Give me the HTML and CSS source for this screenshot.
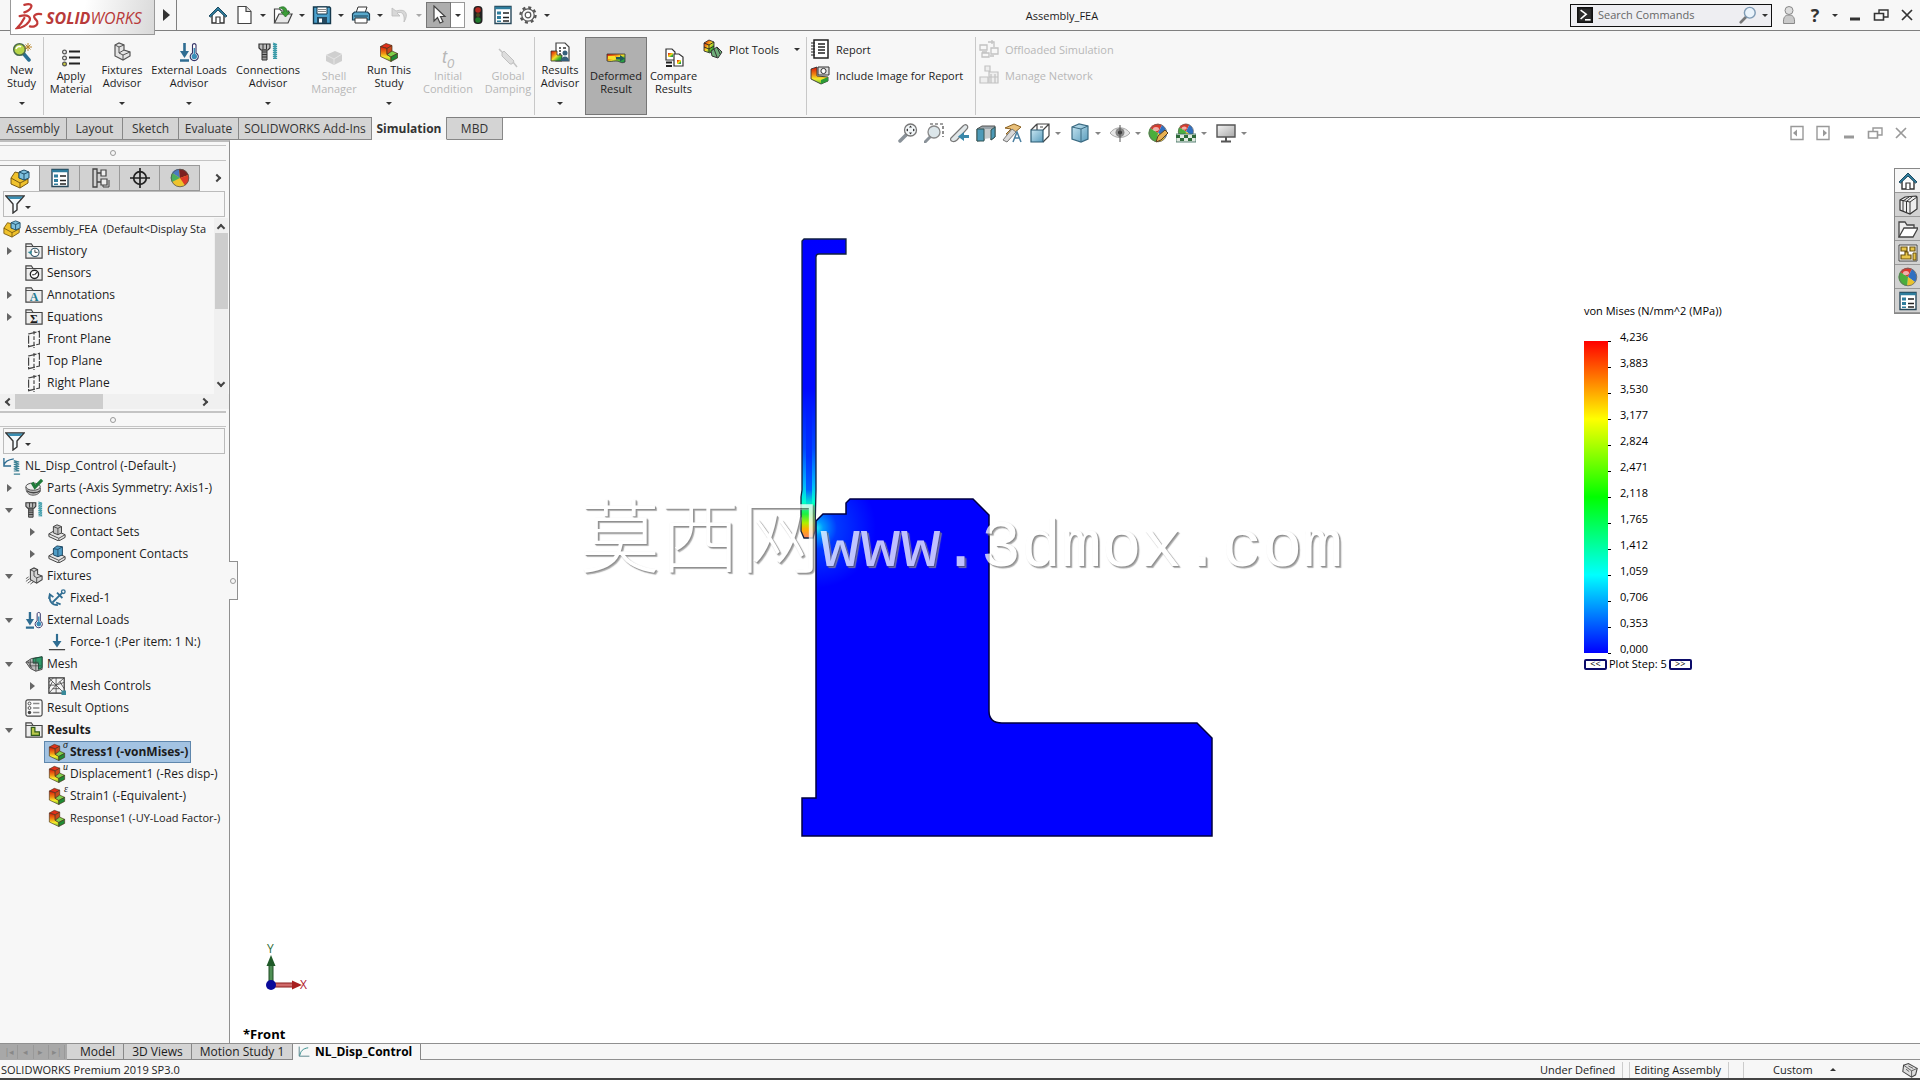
FILE: index.html
```html
<!DOCTYPE html>
<html lang="en">
<head>
<meta charset="utf-8">
<title>Assembly_FEA</title>
<link rel="stylesheet" href="styles.css">
</head>
<body>
<svg class="sprite" aria-hidden="true">
  <defs>
    <linearGradient id="g-rain" x1="0" y1="0" x2="1" y2="1"><stop offset="0" stop-color="#d8130c"/><stop offset=".3" stop-color="#f07a12"/><stop offset=".5" stop-color="#f4e02a"/><stop offset=".75" stop-color="#38b032"/><stop offset="1" stop-color="#127a60"/></linearGradient>
    <linearGradient id="g-side" x1="0" y1="0" x2="0" y2="1"><stop offset="0" stop-color="#d8130c"/><stop offset=".45" stop-color="#f08a12"/><stop offset=".7" stop-color="#f4ea2a"/><stop offset="1" stop-color="#5cc032"/></linearGradient>
    <linearGradient id="g-blue" x1="0" y1="0" x2="1" y2="1"><stop offset="0" stop-color="#c8e6f2"/><stop offset="1" stop-color="#5a9dbd"/></linearGradient>
    <linearGradient id="g-grey" x1="0" y1="0" x2="1" y2="1"><stop offset="0" stop-color="#f4f4f4"/><stop offset="1" stop-color="#a8a8a8"/></linearGradient>
    <symbol id="i-home" viewBox="0 0 20 20"><path d="M4 10v8h12v-8" fill="#fff" stroke="#333" stroke-width="1.4"/><path d="M8 18v-6h4v6" fill="#fff" stroke="#333" stroke-width="1.2"/><path d="M1 11l9-9 9 9-1.500 1L10 5l-7.500 7z" fill="#2f7d9d" stroke="#1d4a60"/></symbol>
    <symbol id="i-new" viewBox="0 0 20 20"><path d="M4 1.500h8l5 5v12H4z" fill="#fff" stroke="#444" stroke-width="1.200"/><path d="M12 1.500v5h5" fill="#ddd" stroke="#444" stroke-width="1.200"/></symbol>
    <symbol id="i-open" viewBox="0 0 20 20"><path d="M1.500 18V4h5l2 2h7v3" fill="#fff" stroke="#444" stroke-width="1.200"/><path d="M1.500 18L6 9h13l-4 9z" fill="#e8e8e8" stroke="#444" stroke-width="1.200"/><path d="M6 3c5-3 8 0 8 4h3l-4.500 5L8 7h3c0-2-2-4-5-4z" fill="#3c9c38" stroke="#1f6a22" stroke-width=".7"/></symbol>
    <symbol id="i-save" viewBox="0 0 20 20"><path d="M1.500 2h16l1 1v15.500h-17z" fill="#4aa0cc" stroke="#15384c" stroke-width="1.400"/><path d="M5 2h10v7H5z" fill="#fff" stroke="#15384c"/><path d="M6 4.500h8M6 6.500h8" stroke="#888"/><path d="M5 18v-6h10v6z" fill="#254a60"/><path d="M7 13.500h3v4H7z" fill="#fff"/></symbol>
    <symbol id="i-print" viewBox="0 0 20 20"><path d="M5 8L7 2h9l-2 6z" fill="#fff" stroke="#333"/><path d="M1.500 9l2-2h13l2 2v6h-17z" fill="#58a9cc" stroke="#1b4156" stroke-width="1.200"/><path d="M4 13h12v5H4z" fill="#fff" stroke="#333"/><path d="M3 11h14" stroke="#1b4156"/></symbol>
    <symbol id="i-undo" viewBox="0 0 20 20"><path d="M2 3v8h8L7 8c5-2 8 1 7 9 5-8 2-14-8-11z" fill="#d8d8d8" stroke="#bbb" stroke-width=".8"/></symbol>
    <symbol id="i-cursor" viewBox="0 0 20 20"><path d="M5 1v15l3.500-3.500L11 18l3-1.300-2.500-5.200H16z" fill="#fff" stroke="#444" stroke-width="1.200"/></symbol>
    <symbol id="i-light" viewBox="0 0 20 20"><rect x="5.500" y="1" width="9" height="18" rx="4" fill="#222"/><circle cx="10" cy="5" r="2.800" fill="#b52a22"/><circle cx="10" cy="10" r="2" fill="#4d4520"/><circle cx="10" cy="15" r="2.800" fill="#1f7a2c"/></symbol>
    <symbol id="i-list" viewBox="0 0 20 20"><path d="M2 1.500h16v17H2z" fill="#fff" stroke="#28485a" stroke-width="1.400"/><path d="M2 3h16" stroke="#2f7d9d" stroke-width="2.500"/><path d="M4 6.500h4v3H4zM4 11h4v3H4zM4 15.500h4v1.500H4z" fill="#2f7d9d"/><path d="M10 8h6M10 12.500h6M10 16h6" stroke="#222" stroke-width="1.400"/></symbol>
    <symbol id="i-gear" viewBox="0 0 20 20"><circle cx="10" cy="10" r="7.500" fill="none" stroke="#555" stroke-width="2.400" stroke-dasharray="3 2.890"/><circle cx="10" cy="10" r="6.200" fill="#fafafa" stroke="#555" stroke-width="1.200"/><circle cx="10" cy="10" r="2.800" fill="#fff" stroke="#555" stroke-width="1.200"/></symbol>
    <symbol id="i-term" viewBox="0 0 20 20"><path d="M1 1h18v18H1z" fill="#2b2b2b" stroke="#111" stroke-width="2"/><path d="M4.500 4l7 5-7 6" fill="none" stroke="#fff" stroke-width="2"/><path d="M10 16h7" stroke="#fff" stroke-width="2"/></symbol>
    <symbol id="i-mag" viewBox="0 0 20 20"><path d="M2 18l6-6" stroke="#777" stroke-width="3" stroke-linecap="round"/><circle cx="12" cy="7.500" r="6" fill="#eaf3fb" stroke="#7f9bb5" stroke-width="1.600"/></symbol>
    <symbol id="i-user" viewBox="0 0 20 20"><path d="M4.500 18.500c-.5-7 2-8.500 5.500-8.500s6 1.500 5.500 8.500z" fill="#c9c9c9" stroke="#888"/><circle cx="10" cy="5.500" r="4" fill="#ddd" stroke="#888"/></symbol>
    <symbol id="i-min" viewBox="0 0 20 20"><path d="M5 14h10" stroke="currentColor" stroke-width="3"/></symbol>
    <symbol id="i-restore" viewBox="0 0 20 20"><path d="M8 8V5h9v7h-4" fill="none" stroke="currentColor" stroke-width="1.400"/><path d="M3.500 8.500h9v6.500h-9z" fill="none" stroke="currentColor" stroke-width="1.600"/></symbol>
    <symbol id="i-close" viewBox="0 0 20 20"><path d="M5 5l10 10M15 5L5 15" stroke="currentColor" stroke-width="1.700"/></symbol>
    <symbol id="i-pleft" viewBox="0 0 20 20"><path d="M4 3.500h12v13H4z" fill="none" stroke="currentColor" stroke-width="1.400"/><path d="M10 6.500v7L6 10z" fill="currentColor"/></symbol>
    <symbol id="i-pright" viewBox="0 0 20 20"><path d="M4 3.500h12v13H4z" fill="none" stroke="currentColor" stroke-width="1.400"/><path d="M10 6.500v7l4-3.500z" fill="currentColor"/></symbol>
    <symbol id="i-study" viewBox="0 0 20 20"><path d="M11 11l6 7" stroke="#2a6f92" stroke-width="3.500" stroke-linecap="round"/><circle cx="7.500" cy="7.500" r="5.800" fill="#b9d64a" stroke="#4a6a4a" stroke-width="1.500"/><path d="M4 7c1-3 4-3 5-2" stroke="#fff" stroke-width="1.500" fill="none"/><path d="M16 1v8M12 5h8M13.500 2.500l5 5M18.500 2.500l-5 5" stroke="#b8862a"/></symbol>
    <symbol id="i-material" viewBox="0 0 20 20"><g fill="#eee" stroke="#555" stroke-width="1.200"><circle cx="3.500" cy="4" r="1.900"/><circle cx="3.500" cy="10" r="1.900"/><circle cx="3.500" cy="16" r="1.900" fill="#c8c840"/></g><path d="M8 3.500h11M8 9.500h11M8 15.500h11" stroke="#222" stroke-width="2"/></symbol>
    <symbol id="i-fixture" viewBox="0 0 20 20"><path d="M3 3l4-2 5 2v5l6 2v4l-7 4-8-4z" fill="#e4e4e4" stroke="#555" stroke-width="1.200"/><path d="M3 3l4 2v6l4 2v5M7 5l5-2M7 11l5-3M11 13l7-3" fill="none" stroke="#555"/></symbol>
    <symbol id="i-fixtree" viewBox="0 0 20 20"><path d="M6 3l4-2 4 2v5l5 2v4l-6 4-7-4z" fill="#d4d4d4" stroke="#444" stroke-width="1.200"/><path d="M6 3l4 2v5l3 2v6M10 5l4-2M13 12l6-2" fill="none" stroke="#444"/><path d="M1 13l3-2M1 16l4-3M3 18l4-3M6 19l4-3" stroke="#555"/></symbol>
    <symbol id="i-loads" viewBox="0 0 20 20"><path d="M5.500 1v12M1 18.500h9" stroke="#2f6d92" stroke-width="2.600"/><path d="M1 9h9l-4.500 7z" fill="#2f6d92"/><path d="M13.500 3a1.800 1.800 0 0 1 3.500 0v8a4 4 0 1 1-3.500 0z" fill="#fff" stroke="#336" stroke-width="1.100"/><circle cx="15.300" cy="14.500" r="2.700" fill="#3a8db8"/><path d="M15.300 6v8" stroke="#3a8db8" stroke-width="1.500"/></symbol>
    <symbol id="i-bolt" viewBox="0 0 20 20"><path d="M1 2h11v4l-2 2H3L1 6z" fill="#bbb" stroke="#333" stroke-width="1.200"/><path d="M4 8h5v10H4z" fill="#999" stroke="#333"/><path d="M4 10h5M4 12.500h5M4 15h5M5 2v5M8.500 2v5" stroke="#333"/><path d="M15 1l4 1.500h-4l4 2h-4l4 2h-4l4 2h-4l4 2h-4l4 2h-4l4 2h-4l4 2h-4" fill="none" stroke="#3a9aa8" stroke-width="1.100"/></symbol>
    <symbol id="i-shell" viewBox="0 0 20 20"><path d="M2 7l9-4 7 3v7l-8 4-8-4z" fill="#cfcfcf"/><path d="M2 7l8 4 8-5M10 11v6" stroke="#e4e4e4" fill="none"/></symbol>
    <symbol id="i-run" viewBox="0 0 20 20"><g stroke="#4a3018" stroke-width=".7" stroke-linejoin="round"><path d="M1.500 4.500L7 1.500l6 2-5 3z" fill="#e0301a"/><path d="M1.500 4.500L8 6.500v6l4 2.500v4.500l-10.500-5z" fill="url(#g-side)"/><path d="M8 6.500l5-3V9l-5 3.500z" fill="#c8481c"/><path d="M8 12.500L13 9l5.500 2.500L12 15z" fill="#7fd04a"/><path d="M12 15l6.500-3.500v4.500L12 19.500z" fill="#1f8a34"/></g></symbol>
    <symbol id="i-damping" viewBox="0 0 20 20"><path d="M1 1l5 5M15 14l4 5" stroke="#c4c4c4" stroke-width="1.500"/><path d="M4 5l2-2 10 10-2 3-2 0-8-8z" fill="#ddd" stroke="#c0c0c0"/></symbol>
    <symbol id="i-results" viewBox="0 0 20 20"><path d="M6 1h9l4 4v14H6z" fill="#fff" stroke="#444" stroke-width="1.200"/><path d="M9 6h2M13 6h3M9 9h2M9 12h2" stroke="#333" stroke-width="1.500"/><path d="M1 9h6v4h5v6H1z" fill="url(#g-rain)" stroke="#333" stroke-width=".8"/><circle cx="15" cy="11" r="2.500" fill="#355f7a"/><path d="M11 19c0-6 8-6 8 0z" fill="#355f7a"/></symbol>
    <symbol id="i-deformed" viewBox="0 0 20 20"><path d="M1 6h18v8c-4 2-5-1-9-1s-6 1-9 0z" fill="url(#g-rain)" stroke="#333" stroke-width=".8"/><path d="M2 8h7v3H2z" fill="#f4e02a"/><path d="M10 9h4V7l5 3.500-5 3v-2h-4z" fill="#1f5a58"/></symbol>
    <symbol id="i-compare" viewBox="0 0 20 20"><path d="M2 1h6l3 3v8H2z" fill="#fff" stroke="#333" stroke-width="1.200"/><path d="M4 5h5v4H4z" fill="url(#g-rain)"/><path d="M10 6h5l4 3v9h-9z" fill="#fff" stroke="#333" stroke-width="1.200"/><path d="M13 12h4v4h-4z" fill="url(#g-rain)"/><path d="M2 14.500h6M2 18h6" stroke="#222" stroke-width="2"/></symbol>
    <symbol id="i-plot" viewBox="0 0 20 20"><path d="M1 4l5-3 5 2v8l-4 3-6-2z" fill="url(#g-rain)" stroke="#333" stroke-width=".9"/><path d="M1 4l5 2 5-3M6 6v7M1 8l5 2 5-3" stroke="#222" stroke-width=".9" fill="none"/><path d="M8 12l6-4 5 5-4 6-6-2z" fill="#6fae7a" stroke="#333"/><path d="M11 10l3 8M14 8l3 7" stroke="#333"/></symbol>
    <symbol id="i-report" viewBox="0 0 20 20"><path d="M4 1h14v18H4z" fill="#fff" stroke="#222" stroke-width="1.500"/><path d="M1 4h4M1 7h4M1 10h4M1 13h4M1 16h4" stroke="#222" stroke-width="1.200"/><path d="M8 5h7M8 8h7M8 11h7M8 14h7" stroke="#222" stroke-width="1.400"/></symbol>
    <symbol id="i-image" viewBox="0 0 20 20"><path d="M1 4l6-2v9l11 1v4l-7 3-10-5z" fill="url(#g-side)" stroke="#333" stroke-width=".9"/><path d="M11 15l7-3v4l-7 3z" fill="#2c9a38"/><path d="M8 2h11v8H8z" fill="#ddd" stroke="#333"/><circle cx="13.500" cy="6" r="2.600" fill="#fff" stroke="#333"/></symbol>
    <symbol id="i-offload" viewBox="0 0 20 20"><g fill="none" stroke="#c2c2c2" stroke-width="1.300"><path d="M1 6h7v5H1zM12 9h7v6h-7zM3 14h7v4H3z"/><path d="M9 3h6v5M11 17h4M13 1v4M3 13h5"/></g></symbol>
    <symbol id="i-network" viewBox="0 0 20 20"><g fill="#eee" stroke="#c2c2c2" stroke-width="1.200"><path d="M6 1h5v5H6zM10 7h9v11h-9z"/><path d="M1 12h8v6H1zM12 9v9M16 9v9M10 12h9"/></g></symbol>
    <symbol id="i-asm" viewBox="0 0 20 20"><path d="M1 9l4-6 4 1v5l9 1v4l-8 5-9-4z" fill="#f0c22c" stroke="#7a5b10" stroke-width="1"/><path d="M1 9l9 5v5M10 14l8-4" fill="none" stroke="#7a5b10"/><path d="M9 3l5-2 5 2v6l-5 2-5-2z" fill="#7dc0de" stroke="#1f4f6a"/><path d="M9 3l5 2 5-2M14 5v6" fill="none" stroke="#1f4f6a"/></symbol>
    <symbol id="i-conf" viewBox="0 0 20 20"><path d="M3 1h4v18H3zM7 5h4M7 14h4" fill="none" stroke="#444" stroke-width="1.300"/><path d="M11 2h5v6h-5zM11 11h6v6h-6z" fill="#eee" stroke="#444" stroke-width="1.200"/><path d="M13 17v2h6v-7" fill="none" stroke="#444"/></symbol>
    <symbol id="i-target" viewBox="0 0 20 20"><circle cx="10" cy="10" r="6.300" fill="none" stroke="#222" stroke-width="1.700"/><path d="M10 0v20M0 10h20" stroke="#222" stroke-width="1.700"/></symbol>
    <symbol id="i-ball" viewBox="0 0 20 20"><path d="M10 10L2 5a9 9 0 0 1 12-3z" fill="#d83a2c"/><path d="M10 10l4-8a9 9 0 0 1 3 13z" fill="#3170c0"/><path d="M10 10l7 5A9 9 0 0 1 9 19z" fill="#e9c22c"/><path d="M10 10l-1 9a9 9 0 0 1-7-14z" fill="#4aae3c"/><circle cx="10" cy="10" r="8.800" fill="none" stroke="#666" stroke-width=".8"/><ellipse cx="8" cy="6" rx="3" ry="2" fill="#fff" opacity=".6"/></symbol>
    <symbol id="i-app" viewBox="0 0 20 20"><circle cx="10" cy="10" r="9" fill="#eec32c"/><path d="M10 10L2 5a9 9 0 0 1 7-4z" fill="#4a7ac0"/><path d="M10 10L9 1a9 9 0 0 1 9.500 6z" fill="#7c2020"/><path d="M10 10l8.500-3A9 9 0 0 1 15 17.500z" fill="#dc3a28"/><path d="M10 10l-8 4a9 9 0 0 1 0-9z" fill="#4aae5c"/><circle cx="10" cy="10" r="8.800" fill="none" stroke="#555" stroke-width=".8"/></symbol>
    <symbol id="i-filter" viewBox="0 0 20 20"><path d="M1 2h18l-7 8v6l-4 3v-9z" fill="#f3fafd" stroke="#333" stroke-width="1.400"/><path d="M2 2.500h16L15.500 5h-11z" fill="#3a8fb4"/></symbol>
    <symbol id="i-folder" viewBox="0 0 20 20"><path d="M1 18V2h6l2 3h10v13z" fill="#eee" stroke="#444" stroke-width="1.300"/><path d="M1 5h8" stroke="#444"/></symbol>
    <symbol id="i-history" viewBox="0 0 20 20"><use href="#i-folder"/><circle cx="11" cy="11.500" r="4.600" fill="#fff" stroke="#356" stroke-width="1.200"/><path d="M11 8.500v3h3" stroke="#333" fill="none"/><path d="M3 11l3.500 3L8 10z" fill="#2f8a9a"/></symbol>
    <symbol id="i-sensor" viewBox="0 0 20 20"><use href="#i-folder"/><circle cx="10.500" cy="11.500" r="4.600" fill="#fff" stroke="#222" stroke-width="1.500"/><path d="M10.500 12l3-3M8 12h2" stroke="#222" stroke-width="1.200"/></symbol>
    <symbol id="i-plane" viewBox="0 0 20 20"><path d="M4 4.500l12-3v14l-12 3z" fill="none" stroke="#444" stroke-width="1.300" stroke-dasharray="9 1.500"/><path d="M10 1v19" stroke="#444" stroke-width="1.300" stroke-dasharray="4 2"/></symbol>
    <symbol id="i-curve" viewBox="0 0 20 20"><path d="M2 1v16h17" stroke="#356a72" stroke-width="1.300" fill="none"/><path d="M3 16C4 9 8 4 17 3" stroke="#2f8a8a" stroke-width="1.600" fill="none"/></symbol>
    <symbol id="i-nl" viewBox="0 0 20 20"><path d="M1 1v9h8M1 9C2 5 5 3 12 2" stroke="#2f6d92" stroke-width="1.500" fill="none"/><path d="M12 4l6 1.500h-6l6 2.500h-6l6 2.500h-6l6 2.500h-6l6 2.500h-6M12 19h7" stroke="#3a7f92" stroke-width="1.200" fill="none"/></symbol>
    <symbol id="i-parts" viewBox="0 0 20 20"><path d="M1 9c0 6 3 9 8 9s9-3 8-8z" fill="#bdbdbd" stroke="#555"/><ellipse cx="9" cy="8.500" rx="8" ry="4" fill="#eee" stroke="#444"/><path d="M2 13c4 3 11 3 15 0" stroke="#444" stroke-width="1.500" fill="none"/><path d="M8 4l3 5 8-8" stroke="#1f7a3a" stroke-width="3.500" fill="none"/></symbol>
    <symbol id="i-contact" viewBox="0 0 20 20"><path d="M1 12l7-4 11 5v3l-7 4-11-5z" fill="#e6e6e6" stroke="#444" stroke-width="1.100"/><path d="M1 12l11 5 7-4M12 17v3" fill="none" stroke="#444"/><path d="M6 4l4-2 5 2v7l-4 2-5-2z" fill="#c4c4c4" stroke="#444" stroke-width="1.100"/><path d="M6 4l5 2 4-2M11 6v7" stroke="#444" fill="none"/></symbol>
    <symbol id="i-comp" viewBox="0 0 20 20"><path d="M1 12l7-4 11 5v3l-7 4-11-5z" fill="#e6e6e6" stroke="#444" stroke-width="1.100"/><path d="M1 12l11 5 7-4M12 17v3" fill="none" stroke="#444"/><path d="M6 4l4-3 6 1v9l-5 2-5-2z" fill="#4f9dc6" stroke="#1f4a66" stroke-width="1.100"/><path d="M6 4l5 1 5-3M11 5v8" stroke="#1f4a66" fill="none"/></symbol>
    <symbol id="i-anchor" viewBox="0 0 20 20"><path d="M16 4L5 15" stroke="#2f6d92" stroke-width="2"/><circle cx="17" cy="3" r="2" fill="none" stroke="#2f6d92" stroke-width="1.500"/><path d="M2 7c-1 6 2 11 9 11M1 11l1-5 4 3M14 17l-5-2M10 4l6 6" fill="none" stroke="#2f6d92" stroke-width="2"/></symbol>
    <symbol id="i-force" viewBox="0 0 20 20"><path d="M10 1v11" stroke="#2f6d92" stroke-width="2.400"/><path d="M5 9h10l-5 7z" fill="#2f6d92"/><path d="M1 18.500h18" stroke="#444" stroke-width="1.400"/></symbol>
    <symbol id="i-mesh" viewBox="0 0 20 20"><path d="M1 8l6-4 12-2v14l-7 2-6-3z" fill="#bbb" stroke="#444"/><path d="M9 4l10-2v12l-4 2V9H9z" fill="#2f9a6a" stroke="#174a35"/><path d="M3 7l5 8M6 5v9M1 8h14M4 12h14M12 3v15" stroke="#444" stroke-width=".8"/></symbol>
    <symbol id="i-meshctl" viewBox="0 0 20 20"><path d="M1 1h17v17H1z" fill="#f4f4f4" stroke="#333" stroke-width="1.300"/><path d="M1 1l8 8 9-8M9 9l9 9M9 9l-8 9M9 9V1M9 9v9M1 9l8 0 9-3M1 6l5-5M5 13l8 0M13 5l5 8M5 5l-4 8" stroke="#444" stroke-width=".9" fill="none"/><path d="M15 15h5v5h-5z" fill="#3a8a9a"/></symbol>
    <symbol id="i-resopt" viewBox="0 0 20 20"><rect x="1" y="1" width="18" height="18" rx="2" fill="#fafafa" stroke="#444" stroke-width="1.300"/><path d="M9 5h7M9 10h7M9 15h7" stroke="#888" stroke-width="1.500"/><circle cx="5" cy="5" r="1.600" fill="none" stroke="#444"/><circle cx="5" cy="10" r="1.600" fill="none" stroke="#444"/><circle cx="5" cy="15" r="1.900" fill="#444"/></symbol>
    <symbol id="i-resfold" viewBox="0 0 20 20"><use href="#i-folder"/><path d="M7 7h4v5h5v4H7z" fill="#b8c84a" stroke="#2f5a1a" stroke-width="1.300"/></symbol>
    <symbol id="i-zoomfit" viewBox="0 0 20 20"><path d="M2 18l6-6" stroke="#8a9299" stroke-width="3.500" stroke-linecap="round"/><circle cx="12.500" cy="7" r="6" fill="#f1f5f7" stroke="#777" stroke-width="1.300"/><path d="M12.500 2.500l1.500 2h-3zM12.500 11.500l1.500-2h-3zM8 7l2-1.500v3zM17 7l-2-1.500v3z" fill="#333"/></symbol>
    <symbol id="i-zoomarea" viewBox="0 0 20 20"><path d="M6 1h13v13" fill="none" stroke="#444" stroke-width="1.200" stroke-dasharray="3 2"/><path d="M1 19l5-5" stroke="#8a9299" stroke-width="3" stroke-linecap="round"/><circle cx="10" cy="9" r="6" fill="#dce6ea" stroke="#888" stroke-width="1.300"/></symbol>
    <symbol id="i-prev" viewBox="0 0 20 20"><path d="M1 15L13 3c3-3 6 0 4 3L7 17c-3 3-8 1-6-2z" fill="#e0e6e8" stroke="#777" stroke-width="1.200"/><path d="M19 12v3h-5v3l-6-4.500L14 9v3z" fill="#3a88aa"/></symbol>
    <symbol id="i-section" viewBox="0 0 20 20"><path d="M1 6l5-3h13v11l-4 3V8H8v9l-7 1z" fill="#9aa4aa" stroke="#555"/><path d="M8 6h7v9l-7 1z" fill="#c4cacc"/><path d="M1 6h7v12H1z" fill="#4d9ab8" stroke="#355"/><path d="M15 7l4-3v10l-4 3z" fill="#4d9ab8" stroke="#355"/></symbol>
    <symbol id="i-anview" viewBox="0 0 20 20"><path d="M3 5l9-4 7 3-9 8-6-1 5-5z" fill="#e9c07a" stroke="#8a6020"/><path d="M1 17l9-11 4 3-9 10z" fill="#d9d9d9" stroke="#777"/><path d="M11 19l4-10 4 10M12.500 15h5" stroke="#4a7fa0" stroke-width="1.500" fill="none"/></symbol>
    <symbol id="i-cubeview" viewBox="0 0 20 20"><path d="M7 1h12v12M7 1L1 7M19 1l-6 6M19 13l-6 6M7 1v6M13 4h-3" stroke="#444" stroke-width="1.200" fill="none"/><path d="M1 7h12v12H1z" fill="url(#g-blue)" stroke="#2a5a72" stroke-width="1.200"/></symbol>
    <symbol id="i-cube" viewBox="0 0 20 20"><path d="M2 4l7-3 9 2v13l-7 3-9-3z" fill="url(#g-blue)" stroke="#3a6a82" stroke-width="1.200"/><path d="M2 4l9 2v13M11 6l7-3" fill="none" stroke="#3a6a82"/></symbol>
    <symbol id="i-eye" viewBox="0 0 20 20"><path d="M0 10c5-7 15-7 20 0-5 6-15 6-20 0z" fill="#e6e6e6" stroke="#aaa"/><circle cx="10" cy="9.500" r="4.500" fill="#888"/><circle cx="10" cy="9.500" r="2" fill="#333"/><path d="M10 2v17" stroke="#555"/></symbol>
    <symbol id="i-ballpen" viewBox="0 0 20 20"><use href="#i-ball"/><path d="M8 19l2-6 7-6 3 3-7 7z" fill="#e8b052" stroke="#5a4020"/></symbol>
    <symbol id="i-scene" viewBox="0 0 20 20"><use href="#i-ball" width="18" height="17" x="1"/><path d="M0 11h20v8H0z" fill="#dfe9df" stroke="#365" stroke-width=".8"/><path d="M0 12h4v3H0zM16 12h4v3h-4zM8 12h4v3H8zM4 15h4v3H4zM12 15h4v3h-4z" fill="#2f6a3a"/></symbol>
    <symbol id="i-monitor" viewBox="0 0 20 20"><path d="M1 2h18v12H1z" fill="url(#g-grey)" stroke="#555" stroke-width="1.400"/><path d="M10 14v4M5 18.500h10" stroke="#555" stroke-width="2"/></symbol>
    <symbol id="i-books" viewBox="0 0 20 20"><path d="M2 5l5-3 11-1 1 1v12l-7 5-10-4z" fill="#eee" stroke="#333" stroke-width="1.200"/><path d="M2 5l10 2 7-5M12 7v12M5 6v10M8.500 6.500v11M5 6l6-4M8.500 6.500l6-5" stroke="#333" fill="none"/></symbol>
    <symbol id="i-folder2" viewBox="0 0 20 20"><path d="M1 18V3h6l2 3h7v3" fill="#eee" stroke="#444" stroke-width="1.300"/><path d="M1 18L6 9h14l-5 9z" fill="#fff" stroke="#444" stroke-width="1.300"/></symbol>
    <symbol id="i-palette" viewBox="0 0 20 20"><path d="M1 2h18v16H1z" fill="#fff" stroke="#444"/><path d="M3 4h6v4H3zM12 4h5v4h-5zM7 9h3v3h3v4H3v-4h4z" fill="#e8c64a" stroke="#6a5210" stroke-width="1.200"/><path d="M15 10h3v7h-3z" fill="#e8c64a" stroke="#6a5210"/></symbol>
    <symbol id="i-tag" viewBox="0 0 20 20"><path d="M2 4l6-2 11 6-2 8-5 3L1 12z" fill="#ddd" stroke="#444" stroke-width="1.300"/><path d="M2 4l10 7 7-3M12 11v8M5 9l4 3M8 5l6 3" stroke="#444" fill="none"/></symbol>
  </defs>
</svg>

<header class="titlebar">
  <div class="brand">
    <svg class="brand-mark" viewBox="0 0 30 30" aria-hidden="true"><g fill="none" stroke="#c23a38" stroke-width="2.400" stroke-linecap="round"><path d="M10 2c6-2 9 0 7 3-1 2-4 4-7 5"/><path d="M5 14c9-2 13 1 10 6-3 4-8 7-13 7 3-3 6-7 8-11"/><path d="M28 12c-5-1-9 1-7 4 1 2 4 3 3 6-1 3-5 4-8 3"/></g></svg>
    <span class="brand-text"><b>SOLID</b>WORKS</span>
  </div>
  <button class="menu-arrow" aria-label="Show menu"></button>
  <nav class="quick" aria-label="Quick access">
    <button class="cell" aria-label="Home"><svg><use href="#i-home"/></svg></button>
    <button class="cell" aria-label="New"><svg><use href="#i-new"/></svg></button><button class="drop" aria-label="New options"></button>
    <button class="cell" aria-label="Open"><svg><use href="#i-open"/></svg></button><button class="drop" aria-label="Open options"></button>
    <button class="cell" aria-label="Save"><svg><use href="#i-save"/></svg></button><button class="drop" aria-label="Save options"></button>
    <button class="cell" aria-label="Print"><svg><use href="#i-print"/></svg></button><button class="drop" aria-label="Print options"></button>
    <button class="cell" aria-label="Undo" disabled><svg><use href="#i-undo"/></svg></button><button class="drop dim" aria-label="Undo options" disabled></button>
    <button class="cell pressed" aria-label="Select"><svg><use href="#i-cursor"/></svg></button><button class="drop boxed" aria-label="Select options"></button>
    <button class="cell" aria-label="Rebuild"><svg><use href="#i-light"/></svg></button>
    <button class="cell" aria-label="File properties"><svg><use href="#i-list"/></svg></button>
    <button class="cell" aria-label="Options"><svg><use href="#i-gear"/></svg></button><button class="drop" aria-label="Options menu"></button>
  </nav>
  <h1 class="doc-title">Assembly_FEA</h1>
  <label class="search"><svg class="s16"><use href="#i-term"/></svg><input type="search" placeholder="Search Commands" aria-label="Search Commands"><svg class="s18"><use href="#i-mag"/></svg><span class="caret"></span></label>
  <div class="win">
    <button class="cell26" aria-label="Log in"><svg><use href="#i-user"/></svg></button>
    <button class="cell26 help" aria-label="Help">?</button><button class="drop" aria-label="Help menu"></button>
    <button class="cell26" aria-label="Minimize"><svg><use href="#i-min"/></svg></button>
    <button class="cell26" aria-label="Restore"><svg><use href="#i-restore"/></svg></button>
    <button class="cell26" aria-label="Close"><svg><use href="#i-close"/></svg></button>
  </div>
</header>

<section class="ribbon" aria-label="Simulation commands">
  <button class="rb menu"><svg><use href="#i-study"/></svg><span>New<br>Study</span></button>
  <i class="sep"></i>
  <button class="rb"><svg><use href="#i-material"/></svg><span>Apply<br>Material</span></button>
  <button class="rb menu"><svg><use href="#i-fixture"/></svg><span>Fixtures<br>Advisor</span></button>
  <button class="rb menu"><svg><use href="#i-loads"/></svg><span>External Loads<br>Advisor</span></button>
  <button class="rb menu"><svg><use href="#i-bolt"/></svg><span>Connections<br>Advisor</span></button>
  <button class="rb" disabled><svg><use href="#i-shell"/></svg><span>Shell<br>Manager</span></button>
  <button class="rb menu"><svg><use href="#i-run"/></svg><span>Run This<br>Study</span></button>
  <button class="rb" disabled><em class="t0">t<sub>0</sub></em><span>Initial<br>Condition</span></button>
  <button class="rb" disabled><svg><use href="#i-damping"/></svg><span>Global<br>Damping</span></button>
  <i class="sep"></i>
  <button class="rb menu"><svg><use href="#i-results"/></svg><span>Results<br>Advisor</span></button>
  <button class="rb on"><svg><use href="#i-deformed"/></svg><span>Deformed<br>Result</span></button>
  <button class="rb"><svg><use href="#i-compare"/></svg><span>Compare<br>Results</span></button>
  <div class="stack">
    <button class="line"><svg><use href="#i-plot"/></svg><span class="grow">Plot Tools</span><span class="caret"></span></button>
  </div>
  <i class="sep"></i>
  <div class="stack">
    <button class="line"><svg><use href="#i-report"/></svg><span>Report</span></button>
    <button class="line"><svg><use href="#i-image"/></svg><span>Include Image for Report</span></button>
  </div>
  <i class="sep"></i>
  <div class="stack">
    <button class="line" disabled><svg><use href="#i-offload"/></svg><span>Offloaded Simulation</span></button>
    <button class="line" disabled><svg><use href="#i-network"/></svg><span>Manage Network</span></button>
  </div>
</section>

<nav class="cmd-tabs" aria-label="Command manager">
  <button>Assembly</button><button>Layout</button><button>Sketch</button><button>Evaluate</button><button class="wide">SOLIDWORKS Add-Ins</button><button class="mid active">Simulation</button><button>MBD</button>
</nav>

<main class="work">
  <aside class="panel">
    <div class="grip top"><i></i></div>
    <div class="ptabs">
      <button class="active" aria-label="Feature tree"><svg><use href="#i-asm"/></svg></button>
      <button aria-label="Properties"><svg><use href="#i-list"/></svg></button>
      <button aria-label="Configurations"><svg><use href="#i-conf"/></svg></button>
      <button aria-label="Dimensions"><svg><use href="#i-target"/></svg></button>
      <button aria-label="Appearances"><svg><use href="#i-app"/></svg></button>
      <button class="more" aria-label="More tabs"><i class="chev right"></i></button>
    </div>
    <label class="filter"><svg><use href="#i-filter"/></svg><span class="caret"></span><input type="text" aria-label="Filter features"></label>
    <div class="upper">
      <ul class="tree">
        <li class="root compact"><span class="label"><svg><use href="#i-asm"/></svg>Assembly_FEA&nbsp; (Default&lt;Display Sta</span></li>
        <li><i class="tw closed"></i><span class="label"><svg><use href="#i-history"/></svg>History</span></li>
        <li><i class="tw"></i><span class="label"><svg><use href="#i-sensor"/></svg>Sensors</span></li>
        <li><i class="tw closed"></i><span class="label"><span class="fold"><svg><use href="#i-folder"/></svg><b class="teal">A</b></span>Annotations</span></li>
        <li><i class="tw closed"></i><span class="label"><span class="fold"><svg><use href="#i-folder"/></svg><b>Σ</b></span>Equations</span></li>
        <li><i class="tw"></i><span class="label"><svg><use href="#i-plane"/></svg>Front Plane</span></li>
        <li><i class="tw"></i><span class="label"><svg><use href="#i-plane"/></svg>Top Plane</span></li>
        <li><i class="tw"></i><span class="label"><svg><use href="#i-plane"/></svg>Right Plane</span></li>
      </ul>
      <div class="vscroll"><i class="chev up"></i><b></b><i class="chev down"></i></div>
    </div>
    <div class="hscroll"><i class="chev left"></i><b></b><i class="chev right"></i></div>
    <div class="grip"><i></i></div>
    <label class="filter"><svg><use href="#i-filter"/></svg><span class="caret"></span><input type="text" aria-label="Filter study"></label>
    <ul class="tree study">
      <li class="root"><span class="label"><svg><use href="#i-nl"/></svg>NL_Disp_Control (-Default-)</span></li>
      <li><i class="tw closed"></i><span class="label"><svg><use href="#i-parts"/></svg>Parts (-Axis Symmetry: Axis1-)</span></li>
      <li><i class="tw open"></i><span class="label"><svg><use href="#i-bolt"/></svg>Connections</span></li>
      <li class="sub"><i class="tw closed"></i><span class="label"><svg><use href="#i-contact"/></svg>Contact Sets</span></li>
      <li class="sub"><i class="tw closed"></i><span class="label"><svg><use href="#i-comp"/></svg>Component Contacts</span></li>
      <li><i class="tw open"></i><span class="label"><svg><use href="#i-fixtree"/></svg>Fixtures</span></li>
      <li class="sub"><i class="tw"></i><span class="label"><svg><use href="#i-anchor"/></svg>Fixed-1</span></li>
      <li><i class="tw open"></i><span class="label"><svg><use href="#i-loads"/></svg>External Loads</span></li>
      <li class="sub"><i class="tw"></i><span class="label"><svg><use href="#i-force"/></svg>Force-1 (:Per item: 1 N:)</span></li>
      <li><i class="tw open"></i><span class="label"><svg><use href="#i-mesh"/></svg>Mesh</span></li>
      <li class="sub"><i class="tw closed"></i><span class="label"><svg><use href="#i-meshctl"/></svg>Mesh Controls</span></li>
      <li><i class="tw"></i><span class="label"><svg><use href="#i-resopt"/></svg>Result Options</span></li>
      <li class="strong"><i class="tw open"></i><span class="label"><svg><use href="#i-resfold"/></svg>Results</span></li>
      <li class="sub strong"><i class="tw"></i><span class="label selected"><span class="fold"><svg><use href="#i-run"/></svg><sup>σ</sup></span>Stress1 (-vonMises-)</span></li>
      <li class="sub"><i class="tw"></i><span class="label"><span class="fold"><svg><use href="#i-run"/></svg><sup>u</sup></span>Displacement1 (-Res disp-)</span></li>
      <li class="sub"><i class="tw"></i><span class="label"><span class="fold"><svg><use href="#i-run"/></svg><sup>ε</sup></span>Strain1 (-Equivalent-)</span></li>
      <li class="sub compact"><i class="tw"></i><span class="label"><svg><use href="#i-run"/></svg>Response1 (-UY-Load Factor-)</span></li>
    </ul>
  </aside>

  <section class="view" aria-label="Model view">
    <button class="handle" aria-label="Collapse panel"><i></i></button>
    <div class="hud">
      <button aria-label="Zoom to fit"><svg><use href="#i-zoomfit"/></svg></button>
      <button aria-label="Zoom to area"><svg><use href="#i-zoomarea"/></svg></button>
      <button aria-label="Previous view"><svg><use href="#i-prev"/></svg></button>
      <button aria-label="Section view"><svg><use href="#i-section"/></svg></button>
      <button aria-label="Annotation views"><svg><use href="#i-anview"/></svg></button>
      <button class="dd" aria-label="View orientation"><svg><use href="#i-cubeview"/></svg></button>
      <button class="dd" aria-label="Display style"><svg><use href="#i-cube"/></svg></button>
      <button class="dd" aria-label="Hide or show items"><svg><use href="#i-eye"/></svg></button>
      <button aria-label="Edit appearance"><svg><use href="#i-ballpen"/></svg></button>
      <button class="dd" aria-label="Apply scene"><svg><use href="#i-scene"/></svg></button>
      <button class="dd" aria-label="View settings"><svg><use href="#i-monitor"/></svg></button>
    </div>
    <div class="docwin">
      <button aria-label="Dock left"><svg><use href="#i-pleft"/></svg></button>
      <button aria-label="Dock right"><svg><use href="#i-pright"/></svg></button>
      <button aria-label="Minimize document"><svg><use href="#i-min"/></svg></button>
      <button aria-label="Restore document"><svg><use href="#i-restore"/></svg></button>
      <button aria-label="Close document"><svg><use href="#i-close"/></svg></button>
    </div>

    <svg class="model" viewBox="800 237 416 602" role="img" aria-label="Stress plot of the assembly section">
      <defs>
        <linearGradient id="m-arm" gradientUnits="userSpaceOnUse" x1="0" y1="239" x2="0" y2="538"><stop offset="0" stop-color="#00f"/><stop offset=".5" stop-color="#0008ff"/><stop offset=".7" stop-color="#0048ff"/><stop offset=".82" stop-color="#00b4ff"/><stop offset=".88" stop-color="#00ffd0"/><stop offset=".92" stop-color="#20f040"/><stop offset=".95" stop-color="#b0f000"/><stop offset=".97" stop-color="#ffb000"/><stop offset="1" stop-color="#ff8060"/></linearGradient>
        <linearGradient id="m-core" gradientUnits="userSpaceOnUse" x1="0" y1="400" x2="0" y2="512"><stop offset="0" stop-color="#0000ff" stop-opacity="0"/><stop offset=".5" stop-color="#0030ff"/><stop offset=".8" stop-color="#0060ff"/><stop offset="1" stop-color="#00e0c0" stop-opacity="0"/></linearGradient>
        <radialGradient id="m-hot" gradientUnits="userSpaceOnUse" cx="816" cy="528" r="60"><stop offset="0" stop-color="#20f0f0"/><stop offset=".12" stop-color="#0098ff"/><stop offset=".35" stop-color="#0038ff"/><stop offset="1" stop-color="#00f"/></radialGradient>
      </defs>
      <path d="M802 798H816V521L823 514H846V503L850 499H973L989 515V711Q989 723 1002 723H1197L1212 738V836H802Z" fill="url(#m-hot)" stroke="#000040" stroke-width="1.500"/>
      <path d="M804 239H846V254H819Q816 254 816 257V490L815 531 813 538H804L801 531V497L802 490V241Z" fill="url(#m-arm)" stroke="#102040" stroke-width="1.300"/>
      <path d="M806 400H812V512H806Z" fill="url(#m-core)"/>
    </svg>
    <p class="mark"><span lang="zh">莫西网</span>www.3dmox.com</p>

    <div class="legend">
      <h2>von Mises (N/mm^2 (MPa))</h2>
      <div class="scale">
        <div class="bar"></div>
        <ol><li>4,236</li><li>3,883</li><li>3,530</li><li>3,177</li><li>2,824</li><li>2,471</li><li>2,118</li><li>1,765</li><li>1,412</li><li>1,059</li><li>0,706</li><li>0,353</li><li>0,000</li></ol>
      </div>
      <div class="step"><button aria-label="Previous step">&lt;&lt;</button><span>Plot Step: 5</span><button aria-label="Next step">&gt;&gt;</button></div>
    </div>

    <nav class="taskpane" aria-label="Task pane">
      <button class="active" aria-label="Resources"><svg><use href="#i-home"/></svg></button>
      <button aria-label="Design library"><svg><use href="#i-books"/></svg></button>
      <button aria-label="File explorer"><svg><use href="#i-folder2"/></svg></button>
      <button aria-label="View palette"><svg><use href="#i-palette"/></svg></button>
      <button aria-label="Appearances and scenes"><svg><use href="#i-ball"/></svg></button>
      <button aria-label="Custom properties"><svg><use href="#i-list"/></svg></button>
    </nav>

    <div class="orient">
      <svg viewBox="0 0 50 50" role="img" aria-label="Axis triad">
        <path d="M9 36V18h4v18z" fill="#4f8f55" stroke="#1f4a24"/><path d="M6.500 19L11 8l4.500 11z" fill="#1f5a28"/>
        <path d="M11 36h22v4H11z" fill="#d06a6a" stroke="#8a1c1c"/><path d="M32 33.500L42 38l-10 4.500z" fill="#a82020"/>
        <circle cx="11" cy="38" r="5" fill="#0a0a9a"/>
      </svg>
      <span class="ax-y">Y</span><span class="ax-x">X</span>
      <strong>*Front</strong>
    </div>
  </section>
</main>

<footer>
  <nav class="sheets" aria-label="Model tabs">
    <div class="nav4"><button aria-label="First">|◂</button><button aria-label="Previous">◂</button><button aria-label="Next">▸</button><button aria-label="Last">▸|</button></div>
    <button class="sheet m">Model</button><button class="sheet v">3D Views</button><button class="sheet s">Motion Study 1</button><button class="sheet n active"><svg><use href="#i-curve"/></svg>NL_Disp_Control</button>
    <div class="track"></div>
  </nav>
  <div class="status">
    <span class="product">SOLIDWORKS Premium 2019 SP3.0</span>
    <span class="st">Under Defined</span><i class="gap8"></i><span class="st">Editing Assembly</span><i class="gap16"></i>
    <button class="units">Custom<i class="caret upw"></i></button>
    <svg><use href="#i-tag"/></svg>
  </div>
</footer>
</body>
</html>
```
FILE: styles.css
```css
* { box-sizing: border-box; }
body {
  margin: 0;
  height: 100vh;
  display: flex;
  flex-direction: column;
  overflow: hidden;
  background: #f7f7f7;
  color: #1c1c1c;
  font: 12px/16px "Open Sans", "Noto Sans", sans-serif;
}
button, input { font: inherit; color: inherit; border: 0; padding: 0; background: none; }
ul, ol, p, h1, h2 { margin: 0; padding: 0; list-style: none; font-weight: 400; }
svg { width: 20px; height: 20px; flex: none; display: block; }
.sprite { position: absolute; width: 0; height: 0; }

.caret, .drop::after, .rb.menu::after, .dd::after {
  content: "";
  width: 0;
  border: 3px solid transparent;
  border-top-color: #333;
  border-bottom-width: 0;
}
.caret.upw { border-width: 0 3px 3px; border-bottom-color: #333; }

/* Title bar */
.titlebar {
  height: 31px;
  flex: none;
  display: flex;
  align-items: center;
  border-bottom: 1px solid #808080;
}
.brand {
  align-self: flex-start;
  position: relative;
  z-index: 2;
  width: 145px;
  height: 35px;
  margin-left: 10px;
  padding: 0 4px;
  display: flex;
  align-items: center;
  gap: 3px;
  background: linear-gradient(100deg, #fff 50%, #d9d9d9);
  border: 1px solid #999;
  border-top: 0;
}
.brand-mark { width: 28px; height: 30px; }
.brand-text { color: #b83a3a; font-size: 16px; font-style: italic; line-height: 20px; padding-top: 2px; }
.menu-arrow { width: 22px; height: 30px; border-right: 1px solid #808080; display: flex; align-items: center; padding-left: 8px; }
.menu-arrow::after { content: ""; border: 6px solid transparent; border-left: 7px solid #333; border-right: 0; }
.quick { display: flex; align-items: center; margin-left: 28px; }
.cell, .cell26, .hud button, .docwin button { width: 25px; height: 26px; display: flex; align-items: center; justify-content: center; }
.cell26 { width: 26px; }
.cell:first-child { width: 26px; }
.drop { width: 14px; height: 26px; display: flex; align-items: center; justify-content: center; }
.drop.dim { opacity: .4; }
.pressed { background: #adadad; border: 1px solid #777; }
.boxed { background: #fff; border: 1px solid #999; border-left: 0; }
.doc-title { flex: 1; text-align: center; font-size: 11px; padding-top: 1px; }
.search {
  width: 202px;
  height: 23px;
  display: flex;
  align-items: center;
  gap: 5px;
  padding: 0 3px 0 6px;
  background: #eeeef2;
  border: 1px solid #111;
  font-size: 11px;
}
.search input { flex: 1; min-width: 0; outline: 0; }
.search input::placeholder { color: #666; }
.s16 { width: 16px; height: 16px; }
.s18 { width: 18px; height: 18px; }
.win { display: flex; margin-left: 4px; color: #333; }
.help { font-size: 18px; font-weight: 700; }

/* Ribbon */
.ribbon {
  flex: none;
  height: 87px;
  padding-top: 6px;
  display: grid;
  grid-template-columns: 43px 1px 54px 48px 86px 72px 60px 50px 68px 52px 1px 50px 62px 53px 106px 1px 168px 1px 1fr;
  font-size: 11px;
  line-height: 13px;
  border-bottom: 1px solid #808080;
}
.sep { background: #c8c8c8; margin-bottom: 2px; }
.rb {
  height: 78px;
  display: flex;
  flex-direction: column;
  align-items: center;
  padding-top: 11px;
  white-space: nowrap;
}
.rb > span { padding-top: 1px; }
.rb.menu { padding-top: 5px; }
.rb.menu::after { margin-top: 13px; }
.rb.on { background: #b0b0b0; border: 1px solid #777; padding-top: 10px; }
.rb:disabled, .line:disabled { color: #b8b8b8; }
.t0 { height: 20px; font: italic 18px/18px "Liberation Sans", sans-serif; }
.t0 sub { font-size: 13px; }
.stack { display: flex; flex-direction: column; margin-top: -1px; }
.line { height: 26px; display: flex; align-items: center; gap: 6px; padding: 0 6px 0 3px; white-space: nowrap; }
.grow { flex: 1; text-align: left; }

/* Command tabs */
.cmd-tabs { flex: none; height: 22px; display: flex; background: #fff; }
.cmd-tabs button {
  width: 56px;
  background: #d4d4d4;
  border-right: 1px solid #888;
  border-bottom: 1px solid #888;
  color: #333;
}
.cmd-tabs button:first-child { width: 67px; }
.cmd-tabs button:nth-child(4) { width: 60px; }
.cmd-tabs .wide { width: 133px; }
.cmd-tabs .mid { width: 75px; }
.cmd-tabs .active { background: #f7f7f7; border-bottom-color: #f7f7f7; font-weight: 700; margin-top: -1px; padding-top: 1px; }

/* Work area */
.work { flex: 1; min-height: 0; display: grid; grid-template-columns: 230px 1fr; }
.panel { border-right: 1px solid #909090; border-top: 2px solid #bdbdbd; display: flex; flex-direction: column; overflow: hidden; }
.grip { height: 16px; flex: none; display: flex; align-items: center; justify-content: center; margin: 2px 3px 1px 0; border-top: 2px solid #c4c4c4; border-bottom: 1px solid #c4c4c4; }
.grip.top { margin: 3px 3px 4px 0; border-top-width: 1px; }
.grip i, .handle i { width: 6px; height: 6px; border: 1px solid #999; border-radius: 50%; }
.ptabs { display: flex; height: 26px; flex: none; }
.ptabs button { width: 40px; display: flex; align-items: center; justify-content: center; background: #d2d2d2; border: 1px solid #999; border-left: 0; }
.ptabs .active { background: #f7f7f7; border-bottom: 0; }
.ptabs .more { flex: 1; background: none; border: 0; padding-left: 4px; }
.filter { height: 26px; flex: none; margin: 0 4px 1px 3px; border: 1px solid #bbb; display: flex; align-items: center; padding-left: 1px; }
.filter .caret { margin-top: 6px; }
.filter input { flex: 1; min-width: 0; outline: 0; }
.upper { display: flex; flex: none; }
.upper .tree { flex: 1; min-width: 0; overflow: hidden; }
.tree li { height: 22px; display: flex; align-items: center; white-space: nowrap; }
.tree .sub { padding-left: 23px; }
.strong { font-weight: 700; }
.compact { font-size: 11px; }
.label { height: 22px; flex: none; display: flex; align-items: center; gap: 3px; padding: 0 2px; border: 1px solid transparent; }
.label svg { width: 20px; height: 18px; }
.root .label { padding-left: 1px; }
.selected { background: #a3c3e2; border-color: #5f87ad; }
.fold { position: relative; }
.fold b { position: absolute; left: 0; right: 0; top: 5px; text-align: center; font: 700 12px/12px "Liberation Serif", serif; }
.teal { color: #1f7a92; }
.fold sup { position: absolute; right: -1px; top: -3px; font: italic 10px/10px "Liberation Serif", serif; }
.tw { width: 21px; flex: none; padding-left: 7px; }
.tw::after { content: ""; display: block; width: 0; }
.tw.closed::after { border: 4px solid transparent; border-left: 5px solid #666; border-right: 0; }
.tw.open { padding-left: 5px; }
.tw.open::after { border: 4px solid transparent; border-top: 5px solid #666; border-bottom: 0; }
.vscroll { width: 14px; margin-right: 1px; display: flex; flex-direction: column; align-items: center; background: #f0f0f0; padding: 7px 0 8px; }
.vscroll b { width: 13px; height: 76px; margin: 2px 0 auto; background: #cdcdcd; }
.hscroll { height: 15px; flex: none; display: flex; align-items: center; padding: 0 22px 0 6px; background: #f0f0f0; }
.hscroll b { width: 88px; height: 15px; margin: 0 auto 0 3px; background: #cdcdcd; }
.chev { width: 6px; height: 6px; border: solid #444; border-width: 2px 2px 0 0; }
.chev.right { transform: rotate(45deg); }
.chev.left { transform: rotate(-135deg); }
.chev.up { transform: rotate(-45deg); }
.chev.down { transform: rotate(135deg); }

/* Model view */
.view { position: relative; background: #fff; }
.hud { position: absolute; top: -20px; left: calc(50% - 2px); transform: translateX(-50%); display: flex; }
.hud button { width: 26px; }
.hud .dd { width: 40px; gap: 5px; }
.dd::after { opacity: .6; }
.docwin { position: absolute; top: -20px; right: 6px; display: flex; color: #999; }
.docwin button { width: 26px; }
.handle { position: absolute; left: -1px; top: 421px; width: 9px; height: 39px; display: flex; align-items: center; justify-content: center; background: #f7f7f7; border: 1px solid #909090; border-left: 0; }
.model { position: absolute; left: 570px; top: 97px; width: 416px; height: 602px; }
.mark {
  position: absolute;
  left: 350px;
  top: 355px;
  font: 67px/100px "Liberation Mono", "Noto Sans CJK SC", monospace;
  color: #fff;
  opacity: .75;
  text-shadow: 1px 1px 1px #666, 2px 2px 1px #999;
  white-space: nowrap;
}
.mark span { font-size: 80px; font-weight: 300; }
.legend { position: absolute; top: 163px; right: 200px; width: 136px; font-size: 11px; line-height: 16px; color: #000; }
.legend h2 { font-size: 11px; white-space: nowrap; }
.scale { display: flex; align-items: flex-start; margin-top: 10px; }
.bar { width: 24px; height: 312px; margin-top: 12px; background: linear-gradient(#f00, #ff0 25%, #0f0 50%, #0ff 75%, #00f); }
.scale li { position: relative; height: 26px; padding-left: 12px; }
.scale li::before { content: ""; position: absolute; left: 0; top: 12px; width: 3px; border-top: 1px solid #000; }
.step { display: flex; align-items: center; gap: 2px; margin-top: -11px; white-space: nowrap; }
.step button { width: 23px; height: 11px; flex: none; border: 2px solid #0c0c6a; border-radius: 2px; font-size: 9px; line-height: 6px; }
.taskpane { position: absolute; right: 0; top: 28px; width: 26px; border: 1px solid #888; border-right: 0; }
.taskpane button { width: 25px; height: 24px; display: flex; align-items: center; justify-content: center; background: #d2d2d2; border-bottom: 1px solid #999; }
.taskpane .active { background: #f7f7f7; }
.orient { position: absolute; left: 13px; bottom: 0; width: 80px; height: 100px; }
.orient svg { position: absolute; left: 17px; top: 4px; width: 50px; height: 50px; }
.orient span { position: absolute; font-size: 12px; line-height: 12px; }
.ax-y { left: 24px; top: 0; color: #2f6a35; }
.ax-x { left: 57px; top: 36px; color: #b02030; }
.orient strong { position: absolute; left: 0; bottom: 0; font-size: 13px; line-height: 18px; color: #000; }

/* Footer */
footer { flex: none; border-bottom: 2px solid #444; }
.sheets { display: flex; height: 17px; border-top: 1px solid #909090; line-height: 14px; }
.nav4 { width: 67px; display: flex; background: #a8a8a8; padding: 1px 2px; color: #888; font-size: 9px; line-height: 12px; }
.nav4 button { flex: 1; border-right: 1px solid #999; }
.sheet { background: #d4d4d4; border-right: 1px solid #888; border-bottom: 1px solid #888; white-space: nowrap; }
.m { width: 57px; padding-left: 5px; }
.v { width: 68px; }
.s { width: 101px; }
.n { width: 128px; display: flex; align-items: center; gap: 5px; padding-left: 5px; }
.sheet.active { background: #f7f7f7; border-bottom: 0; font-weight: 700; color: #000; }
.sheet svg { width: 12px; height: 12px; }
.track { flex: 1; border-bottom: 1px solid #909090; }
.status { height: 18px; display: flex; align-items: center; padding: 1px 2px 0 1px; font-size: 11px; }
.product { flex: 1; }
.gap8, .gap16 { height: 16px; border: solid #ccc; border-width: 0 1px; margin: 0 4px 0 7px; width: 8px; }
.gap16 { width: 16px; margin-right: 0; }
.units { width: 158px; display: flex; align-items: center; gap: 17px; padding-left: 29px; }
.status svg { width: 16px; height: 16px; }
```
